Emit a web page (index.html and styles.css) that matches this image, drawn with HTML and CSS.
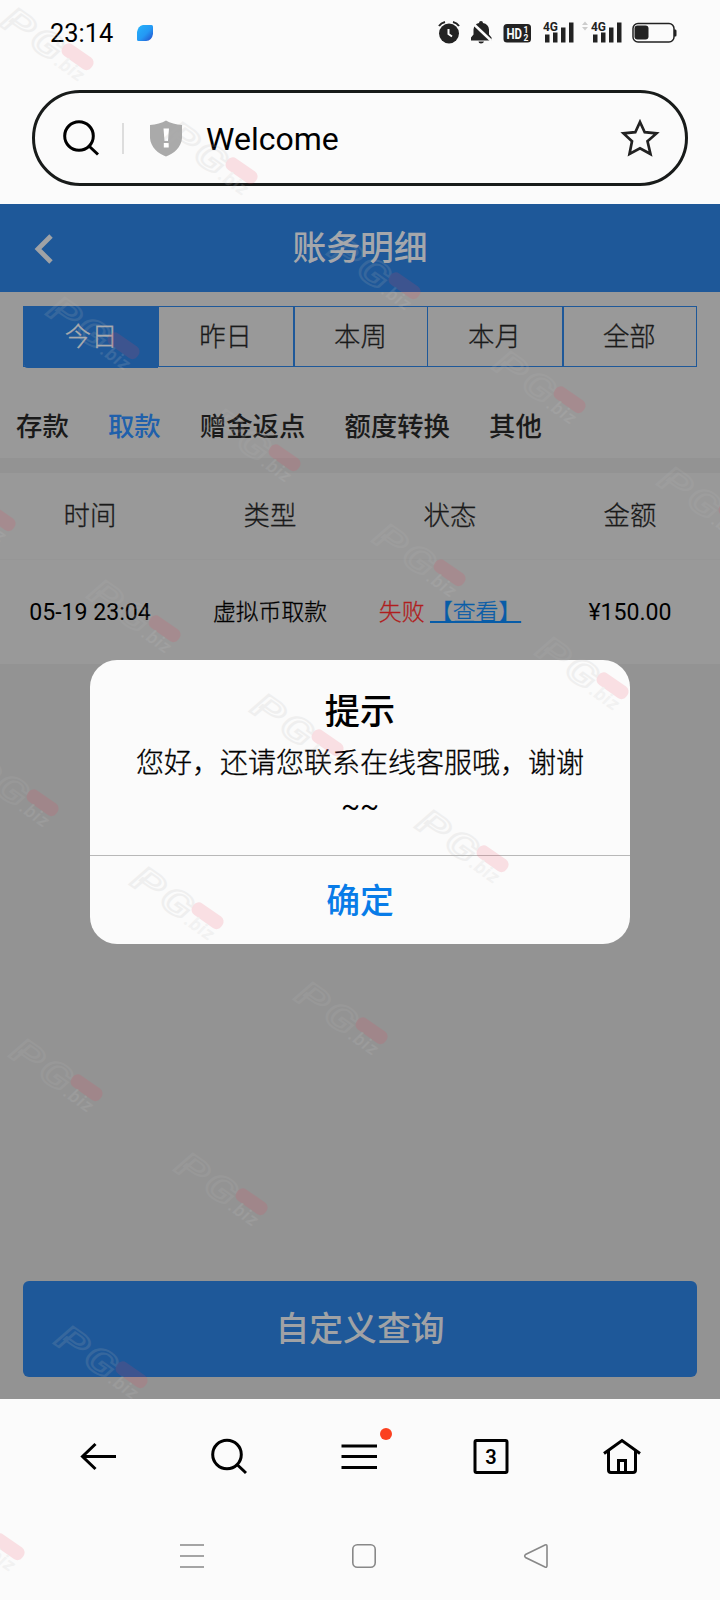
FILE: index.html
```html
<!DOCTYPE html>
<html lang="zh-CN">
<head>
<meta charset="utf-8">
<title>账务明细</title>
<link rel="stylesheet" href="styles.css">
</head>
<body>
<div class="screen">
  <div class="status">
    <span class="clock">23:14</span>
    <svg class="leaf" width="16" height="16" viewBox="0 0 16 16"><defs><linearGradient id="lf" x1="0" y1="0" x2="1" y2="1"><stop offset="0" stop-color="#25b4fa"/><stop offset=".55" stop-color="#2498f4"/><stop offset="1" stop-color="#2448c8"/></linearGradient></defs><path d="M6 0H14.5Q16 0 16 1.5V9Q15 15.5 9 16H1.500Q0 16 0 14.500V7Q1 1 6 0Z" fill="url(#lf)"/></svg>
    <svg class="indicators" width="240" height="26" viewBox="437 19.500 240 26">
      <g fill="#222">
        <circle cx="449" cy="33" r="10"/>
        <path d="M439 25.500Q441 22.500 445 21.500M459 25.500Q457 22.500 453 21.500" fill="none" stroke="#222" stroke-width="2"/>
        <path d="M448.500 28.500V33.500L452 36" fill="none" stroke="#fbfbfb" stroke-width="2"/>
        <path d="M471 40V37L473.500 34V29Q474 23.500 479 22.500Q479 20.500 481 20.500T483 22.500Q488.500 23.500 489 29V34L491.500 37V40Z"/>
        <path d="M478.500 41H484Q483.500 43 481 43T478.500 41Z"/>
        <path d="M472.500 22.500L491.500 40.500" stroke="#fbfbfb" stroke-width="2.500"/>
        <rect x="503.500" y="23.500" width="27.500" height="18.500" rx="3.500"/>
        <path d="M545 34h4.500v8h-4.500zM553 32h4.500v10h-4.500zM561 27h4.500v15h-4.500zM569 22h4.500v20h-4.500zM593 34h4.500v8h-4.500zM601 32h4.500v10h-4.500zM609 27h4.500v15h-4.500zM617 22h4.500v20h-4.500z"/>
        <rect x="634.500" y="25" width="14" height="14" rx="3"/>
        <path d="M674 29h1.500q1 0 1 1.500v4q0 1.500-1 1.500h-1.500z"/>
      </g>
      <path d="M582 24.500L585 21L588 24.500ZM582 26.500L585 30L588 26.500Z" fill="#ccc"/>
      <rect x="633" y="23" width="41" height="18.500" rx="5" fill="none" stroke="#222" stroke-width="1.500"/>
      <g class="glyphs"><text x="506.500" y="38" font-size="14.500" textLength="15.500" lengthAdjust="spacingAndGlyphs" fill="#fbfbfb">HD</text><text x="523.500" y="32" font-size="8.500" fill="#fbfbfb">1</text><text x="523.500" y="40" font-size="8.500" fill="#fbfbfb">2</text>
      <text x="543" y="30.500" font-size="13.500" textLength="15" lengthAdjust="spacingAndGlyphs" fill="#222">4G</text><text x="591" y="30.500" font-size="13.500" textLength="15" lengthAdjust="spacingAndGlyphs" fill="#222">4G</text></g>
    </svg>
  </div>

  <div class="address">
    <svg class="glass" width="38" height="38" viewBox="0 0 38 38"><circle cx="17" cy="17" r="14.300"/><path d="M27 27L36 35.500"/></svg>
    <span class="divider"></span>
    <svg class="shield" width="34" height="37" viewBox="0 0 34 37"><path d="M17 .5C21 3 27 4.500 33 5V18C32.500 27 24.500 34 17 36.500C9.500 34 1.500 27 1 18V5C7 4.500 13 3 17 .5Z" fill="#aaa"/><path d="M14.500 8.500H20L19 21H15.500ZM14.800 23H19.700V27.500H14.800Z" fill="#fff"/></svg>
    <span class="site">Welcome</span>
    <svg class="star" width="40" height="40" viewBox="0 0 40 40"><path d="M20 4L24.700 14.200L36.500 15.400L27.500 23.300L30.500 36L20 30.200L9.500 36L12 23.300L3.500 15.400L15.300 14.200Z"/></svg>
  </div>

  <main class="page">
    <header class="titlebar">
      <svg class="back" width="20" height="32" viewBox="0 0 20 32"><path d="M17 3L4 16L17 29"/></svg>
      <h1>账务明细</h1>
    </header>
    <section class="filters">
      <div class="ranges"><span class="range active">今日</span><span class="range">昨日</span><span class="range">本周</span><span class="range">本月</span><span class="range">全部</span></div>
      <nav class="kinds"><span>存款</span><span class="chosen">取款</span><span>赠金返点</span><span>额度转换</span><span>其他</span></nav>
    </section>
    <section class="table">
      <div class="row head"><span>时间</span><span>类型</span><span>状态</span><span>金额</span></div>
      <div class="row data"><span class="num">05-19 23:04</span><span>虚拟币取款</span><span class="state">失败 <a>【查看】</a></span><span class="num">¥150.00</span></div>
    </section>
    <div class="query">自定义查询</div>
    <div class="dialog">
      <div class="message"><h2>提示</h2><p>您好，还请您联系在线客服哦，谢谢<br><span class="tail">~~</span></p></div>
      <div class="confirm">确定</div>
    </div>
  </main>

  <nav class="toolbar">
    <svg width="40" height="40" viewBox="0 0 40 40"><path d="M38 20.500H4M17.500 8L4.500 20.500L17.500 33"/></svg>
    <svg width="40" height="40" viewBox="0 0 40 40"><circle cx="18" cy="18.500" r="14.300"/><path d="M28 28.500L37 37"/></svg>
    <svg width="40" height="40" viewBox="0 0 40 40"><path d="M1.500 10H37M1.500 20.500H37M1.500 31.500H37"/></svg>
    <svg width="40" height="40" viewBox="0 0 40 40"><rect x="4" y="4.500" width="32" height="32" rx="1.500"/><text x="20" y="28" text-anchor="middle">3</text></svg>
    <svg width="40" height="40" viewBox="0 0 40 40"><path d="M2 17.500L20 4.500L38 17.500M6.500 15V34Q6.500 36.500 9 36.500H31Q33.500 36.500 33.500 34V15M16.500 36V24.500H23.500V36"/></svg>
    <i class="dot"></i>
  </nav>
  <nav class="system">
    <svg width="26" height="26" viewBox="0 0 26 26"><path d="M1 2H25M1 13H25M1 24H25"/></svg>
    <svg width="26" height="26" viewBox="0 0 26 26"><rect x="1.800" y="1.800" width="22.400" height="22.400" rx="4.500"/></svg>
    <svg width="26" height="26" viewBox="0 0 26 26"><path d="M2.500 11.500L22 2Q24 1.200 24 3.500V22.500Q24 24.800 22 24L2.500 14.500Q1 13 2.500 11.500Z"/></svg>
  </nav>

  <svg class="marks" width="720" height="1600" viewBox="0 0 720 1600">
    <defs><g id="mark"><g transform="rotate(35)"><text class="big" x="-83" y="19" textLength="31" lengthAdjust="spacingAndGlyphs">P</text><text class="big" x="-49" y="19" textLength="32" lengthAdjust="spacingAndGlyphs">G</text><rect x="-18" y="-7" width="35" height="14" rx="6"/><text class="biz" x="-16" y="20" textLength="31">.biz</text></g></g></defs>
    <use href="#mark" x="78" y="57"/><use href="#mark" x="242" y="171"/><use href="#mark" x="405" y="286"/><use href="#mark" x="124" y="346"/><use href="#mark" x="570" y="400"/><use href="#mark" x="285" y="458"/><use href="#mark" x="0" y="518"/><use href="#mark" x="735" y="516"/><use href="#mark" x="450" y="573"/><use href="#mark" x="165" y="629"/><use href="#mark" x="613" y="686"/><use href="#mark" x="328" y="743"/><use href="#mark" x="43" y="803"/><use href="#mark" x="493" y="859"/><use href="#mark" x="208" y="916"/><use href="#mark" x="372" y="1031"/><use href="#mark" x="87" y="1088"/><use href="#mark" x="252" y="1202"/><use href="#mark" x="132" y="1375"/><use href="#mark" x="9" y="1547"/>
  </svg>
</div>
</body>
</html>
```
FILE: styles.css
```css
* { box-sizing: border-box; }
body { margin: 0; }
.screen {
  position: relative;
  width: 720px;
  height: 1600px;
  overflow: hidden;
  display: flex;
  flex-direction: column;
  background: #fbfbfb;
  color: #000;
  font-family: Roboto, "Noto Sans CJK SC", sans-serif;
}
svg { display: block; flex: none; }
h1, h2, p { margin: 0; }

.status { height: 65px; display: flex; align-items: center; padding: 0 43px 0 50px; }
.clock { width: 87px; font-size: 25.4px; }
.indicators { margin-left: auto; }
.glyphs { font-weight: 700; }

.address {
  height: 96px;
  margin: 25px 32px 18px;
  padding: 0 25px 0 27px;
  display: flex;
  align-items: center;
  border: 3px solid #181b1a;
  border-radius: 48px;
}
.glass { fill: none; stroke: #000; stroke-width: 3; }
.divider { width: 2px; height: 31px; margin-left: 22px; background: #ddd; }
.shield { margin-left: 25px; }
.site { margin-left: 23px; padding-top: 1px; font-size: 32px; }
.star { margin-left: auto; fill: none; stroke: #222; stroke-width: 2.7; }

.page { position: relative; height: 1195px; flex: none; background: #939393; display: flex; flex-direction: column; }
.titlebar { height: 88px; display: grid; grid-template-columns: 60px 1fr 60px; align-items: center; background: #1e5899; color: #a5a7ab; }
.back { margin: 1px 0 0 34px; fill: none; stroke: #a0a2a5; stroke-width: 4.8; }
.titlebar h1 { padding-top: 2px; text-align: center; font-size: 33.8px; font-weight: 500; line-height: 40px; }
.filters { height: 166px; padding: 14px 23px 0; background: #999; }
.ranges { display: grid; grid-template-columns: repeat(5, 1fr); height: 61px; border: 1px solid #1e5899; }
.range { display: flex; align-items: center; justify-content: center; padding: 0 1px 4px 0; border-left: 1px solid #1e5899; font-size: 26.4px; font-weight: 300; -webkit-text-stroke: .3px; color: #1a1a1a; }
.range:nth-child(3), .range:nth-child(5) { border-left-width: 2px; }
.range.active { margin-bottom: -2px; padding-bottom: 6px; border-radius: 0 0 0 4px; background: #1e5899; color: #a8aaae; }
.kinds { display: flex; gap: 39.1px; margin: 40px 0 0 -7px; font-size: 26.4px; font-weight: 500; line-height: 40px; color: #1a1a1a; }
.chosen { color: #2060ab; }
.table { margin-top: 15px; background: #999; }
.row { display: grid; grid-template-columns: repeat(4, 1fr); align-items: center; text-align: center; }
.head { height: 87px; padding-bottom: 5px; font-size: 26.4px; font-weight: 300; -webkit-text-stroke: .3px; color: #1a1a1a; border-bottom: 1px solid #969696; }
.data { height: 104px; padding-bottom: 3px; font-size: 22.8px; font-weight: 300; -webkit-text-stroke: .3px; }
.num { padding-top: 3px; font-size: 23.1px; font-weight: 400; -webkit-text-stroke: 0; }
.state { color: #b01d1d; white-space: nowrap; }
.state a { color: #075ca8; text-decoration: underline; text-decoration-thickness: 2px; }
.query { height: 96px; margin: auto 23px 22px; padding-bottom: 6px; display: flex; align-items: center; justify-content: center; border-radius: 6px; background: #1e5899; color: #a0a2a5; font-size: 33.8px; font-weight: 500; }

.dialog { position: absolute; left: 90px; top: 456px; width: 540px; height: 284px; border-radius: 27px; background: #fbfbfb; text-align: center; }
.message { height: 196px; padding-top: 27px; border-bottom: 1px solid #b8b8b8; }
.message h2 { font-size: 35.2px; font-weight: 500; line-height: 50px; }
.message p { font-size: 28px; font-weight: 300; -webkit-text-stroke: .3px; line-height: 42px; padding-top: 6px; }
.tail { font-weight: 400; -webkit-text-stroke: 0; }
.confirm { height: 88px; padding-bottom: 4px; display: flex; align-items: center; justify-content: center; color: #087ce8; font-size: 33.8px; font-weight: 500; }

.toolbar { position: relative; height: 113px; display: flex; justify-content: space-between; align-items: center; padding: 0 78px; flex: none; }
.toolbar svg { fill: none; stroke: #000; stroke-width: 3; }
.toolbar text { fill: #000; stroke: none; font-size: 20px; font-weight: 600; }
.dot { position: absolute; left: 380px; top: 29px; width: 12px; height: 12px; border-radius: 50%; background: #fb4120; }
.system { height: 88px; display: flex; justify-content: space-between; align-items: center; padding: 0 171px 0 179px; }
.system svg { fill: none; stroke: #888; stroke-width: 1.6; }

.marks { position: absolute; left: 0; top: 0; pointer-events: none; opacity: .16; }
.marks text { fill: none; stroke: #b5b5b5; stroke-width: 2; font-weight: 500; font-style: italic; }
.marks .big { font-size: 35px; }
.marks .biz { font-size: 18px; fill: #ccc; stroke-width: .3; }
.marks rect { fill: #f0405a; opacity: .9; }
```
